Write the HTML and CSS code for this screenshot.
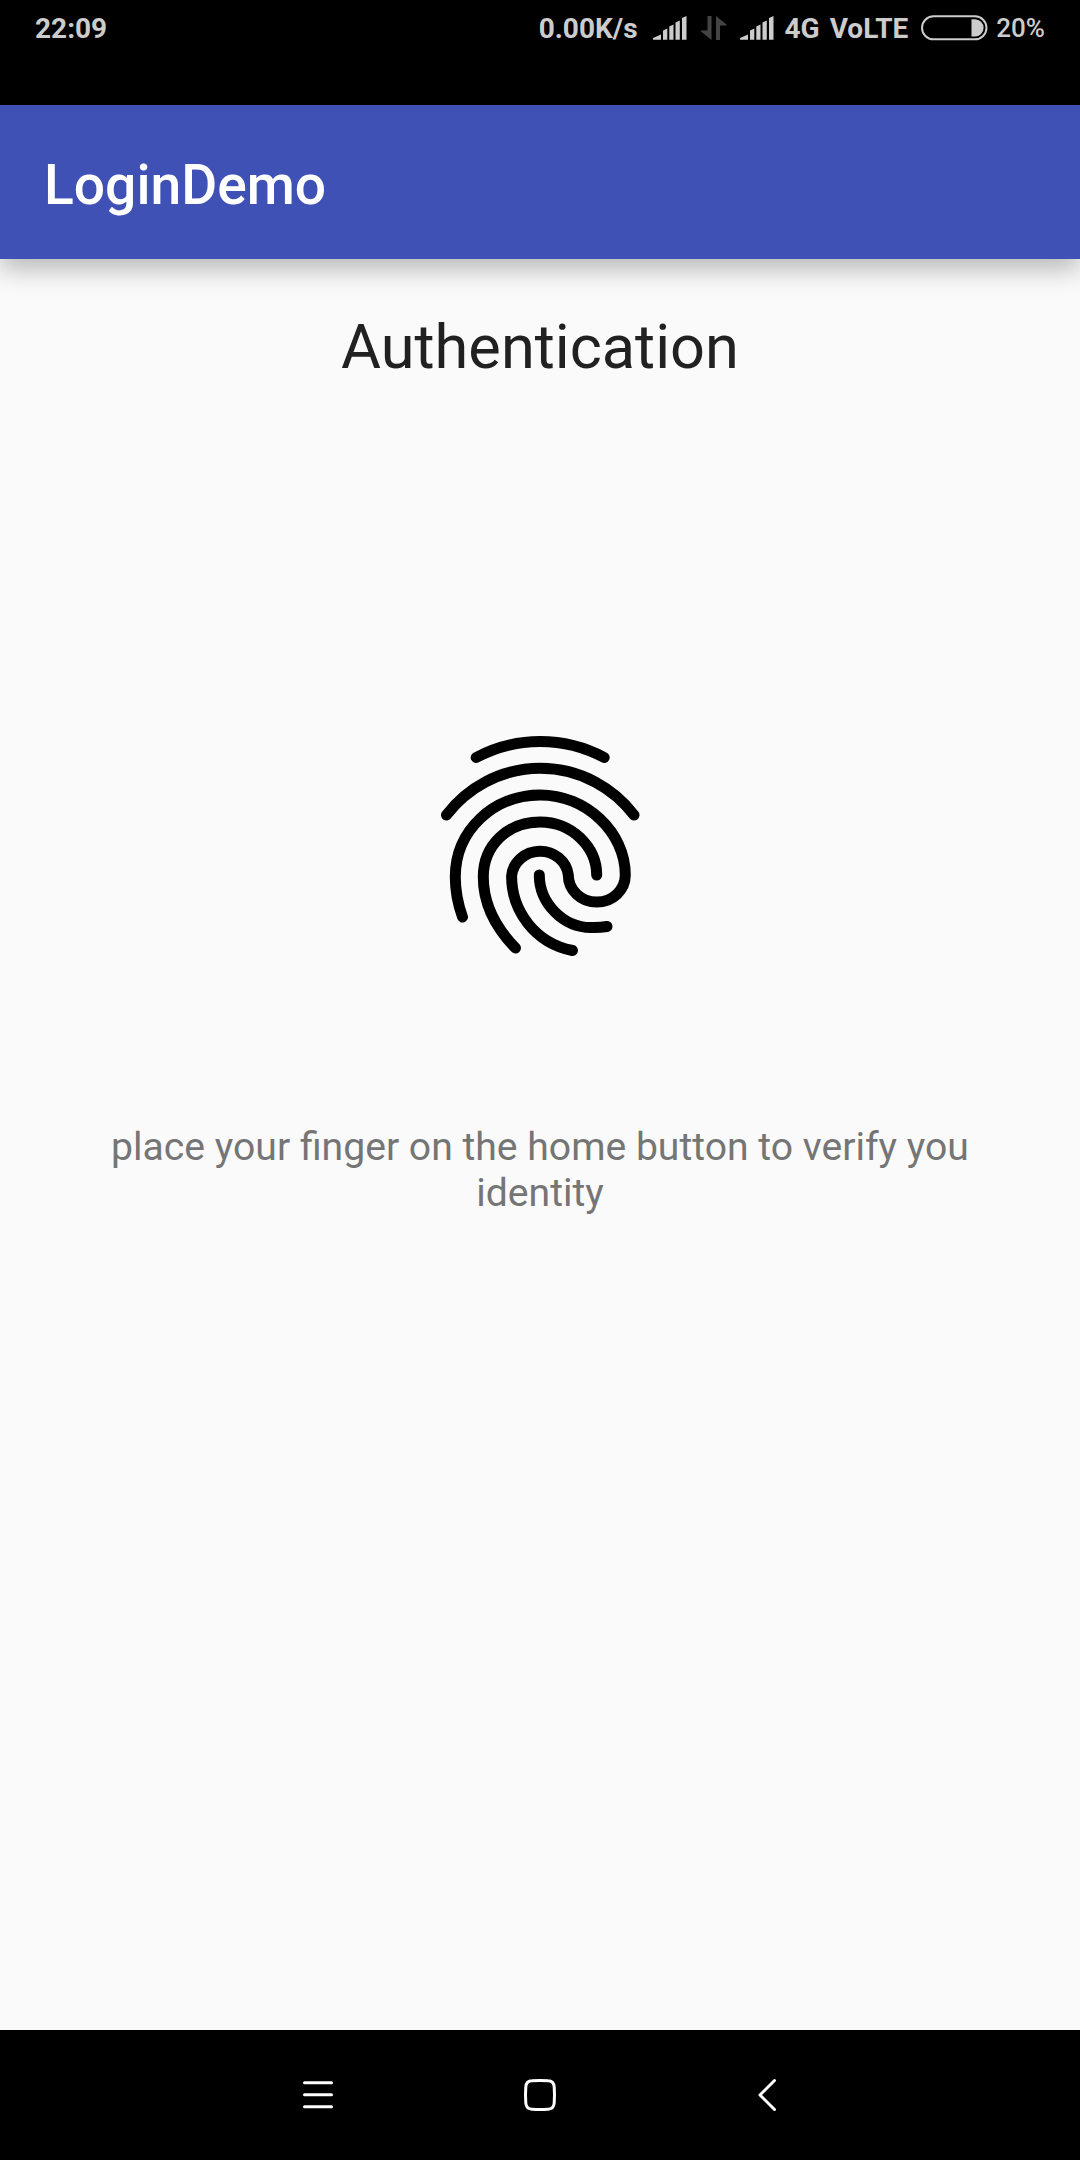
FILE: index.html
```html
<!DOCTYPE html>
<html lang="en">
<head>
<meta charset="utf-8">
<title>LoginDemo</title>
<link rel="stylesheet" href="styles.css">
</head>
<body>
<div class="screen">
  <div class="status-bar">
    <span class="clock">22:09</span>
    <div class="status-right">
      <span class="speed">0.00K/s</span>
      <svg class="signal" width="34" height="24" viewBox="0 0 34 24"><path d="M0 23.7V22L8 18.5V23.7ZM10 23.7V14.5L14.3 12.5V23.7ZM16.3 23.7V10.5L20.5 8.5V23.7ZM22.5 23.7V6.5L26.8 4.5V23.7ZM29 23.7V2L33.5 0V23.7Z"/></svg>
      <svg class="arrows" width="26" height="24" viewBox="0 0 26 24"><path d="M10.5 0V24L0 15.5V14.5H6.5V0ZM15 24V0L25.5 8.5V9.5H19V24Z"/></svg>
      <svg class="signal" width="34" height="24" viewBox="0 0 34 24"><path d="M0 23.7V22L8 18.5V23.7ZM10 23.7V14.5L14.3 12.5V23.7ZM16.3 23.7V10.5L20.5 8.5V23.7ZM22.5 23.7V6.5L26.8 4.5V23.7ZM29 23.7V2L33.5 0V23.7Z"/></svg>
      <span class="network">4G</span>
      <span class="volte">VoLTE</span>
      <svg class="battery" width="67" height="26" viewBox="0 0 67 26"><rect x="1" y="1.3" width="64.5" height="23" rx="11.5"/><path d="M50.5 4.2H54A8.6 8.6 0 0 1 54 21.4H50.5Z"/></svg>
      <span class="percent">20%</span>
    </div>
  </div>
  <header class="app-bar"><h1 class="app-title">LoginDemo</h1></header>
  <main class="content">
    <h2 class="heading">Authentication</h2>
    <svg class="fingerprint" width="240" height="250" viewBox="0 0 240 250">
      <path d="M56.2 37.5A136 136 0 0 1 184.2 37.5"/>
      <path d="M26.5 95A117.5 117.5 0 0 1 214 95"/>
      <path d="M42.5 197C37.5 183 35.3 170 35.3 157C35.3 110 74 75 120 75S205.3 112 205.3 155A28.4 27 0 0 1 148.3 155A28.5 27 0 0 0 91.6 156C91.6 191 115 223 152.5 230.5"/>
      <path d="M95.5 228C75 207 63.3 184 63.3 157C63.3 125 88 102 120 102S176.7 127 176.7 155"/>
      <path d="M119.3 155C119.3 183 143 207.5 171 207.5Q179 207.8 187 206.5"/>
    </svg>
    <p class="hint">place your finger on the home button to verify you identity</p>
  </main>
  <nav class="nav-bar">
    <svg width="32" height="32" viewBox="0 0 32 32"><path d="M2.5 3.8H29.5M2.5 15.8H29.5M2.5 27.8H29.5"/></svg>
    <svg class="home" width="34" height="34" viewBox="0 0 34 34"><path d="M9 2.8Q17 2.2 25 2.8Q30.8 3 31.2 9Q31.8 17 31.2 25Q30.8 31 25 31.2Q17 31.8 9 31.2Q3.2 31 2.8 25Q2.2 17 2.8 9Q3.2 3 9 2.8Z"/></svg>
    <svg class="back" width="20" height="34" viewBox="0 0 20 34"><path d="M17.5 2.5L3 17L17.5 31.5"/></svg>
  </nav>
</div>
</body>
</html>
```
FILE: styles.css
```css
body {
  margin: 0;
  font-family: Roboto, sans-serif;
}

.screen {
  width: 1080px;
  height: 2160px;
  display: flex;
  flex-direction: column;
  background: #fafafa;
}

.status-bar {
  height: 105px;
  flex: none;
  box-sizing: border-box;
  padding: 0 35px;
  display: flex;
  justify-content: space-between;
  align-items: flex-start;
  background: #000;
  color: #ccc;
  font-size: 28px;
  font-weight: 700;
  line-height: 58px;
  white-space: nowrap;
}

.status-right {
  display: flex;
}

.signal,
.arrows,
.battery {
  flex: none;
  margin-top: 16px;
}

.signal {
  fill: #ccc;
}

.speed {
  margin-right: 15px;
}

.arrows {
  margin-left: 14px;
  margin-right: 13px;
  fill: #444;
}

.network {
  margin-left: 11px;
}

.volte {
  margin-left: 10px;
}

.battery {
  margin-top: 15px;
  margin-left: 13px;
  margin-right: 8px;
}

.battery rect {
  fill: none;
  stroke: #ccc;
  stroke-width: 2;
}

.battery path {
  fill: #ccc;
}

.percent {
  font-size: 26px;
  font-weight: 500;
  line-height: 56px;
}

.app-bar {
  height: 154px;
  flex: none;
  box-sizing: border-box;
  padding: 5px 44px 0;
  display: flex;
  align-items: center;
  background: #3f51b5;
  box-shadow: 0 10px 24px rgba(0, 0, 0, .27);
}

.app-title {
  margin: 0;
  color: #fff;
  font-size: 55.2px;
  font-weight: 500;
  line-height: 64px;
}

.content {
  flex: 1;
  display: flex;
  flex-direction: column;
  align-items: center;
}

.heading {
  margin: 52px 0 0;
  color: #212121;
  font-size: 61.3px;
  font-weight: 400;
  line-height: 72px;
}

.fingerprint {
  margin-top: 337px;
  flex: none;
  fill: none;
  stroke: #000;
  stroke-width: 11;
  stroke-linecap: round;
}

.hint {
  width: 900px;
  margin: 154px 0 0;
  color: #757575;
  font-size: 39.13px;
  line-height: 46px;
  text-align: center;
}

.nav-bar {
  height: 130px;
  flex: none;
  display: flex;
  align-items: center;
  padding-left: 302px;
  background: #000;
}

.nav-bar svg {
  flex: none;
  fill: none;
  stroke: #fff;
  stroke-width: 3;
  stroke-linecap: round;
  stroke-linejoin: round;
}

.home {
  margin-left: 189px;
}

.back {
  margin-left: 200px;
}
```
